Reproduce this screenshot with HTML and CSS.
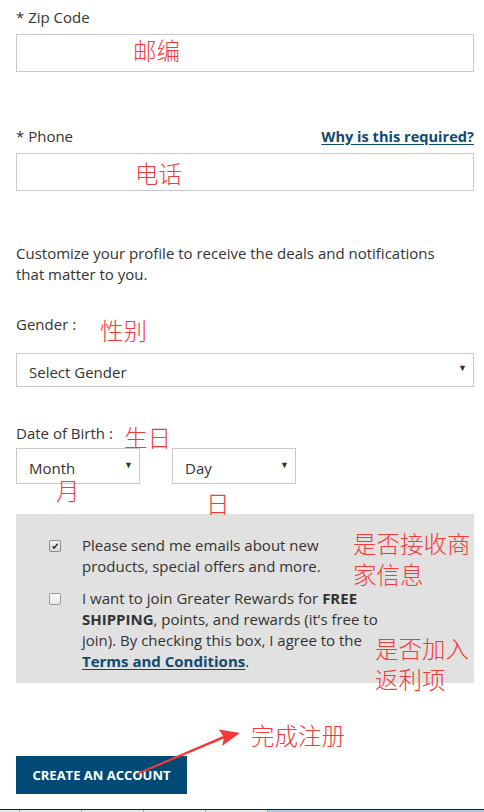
FILE: index.html
```html
<!DOCTYPE html>
<html>
<head>
<meta charset="utf-8">
<link rel="stylesheet" href="styles.css">
</head>
<body>
<div class="page">
  <form class="form">
    <div class="field field-zip">
      <div class="label-row"><label class="label">* Zip Code</label></div>
      <div class="input"></div>
    </div>
    <div class="field field-phone">
      <div class="label-row">
        <label class="label">* Phone</label>
        <a class="why">Why is this required?</a>
      </div>
      <div class="input"></div>
    </div>
    <p class="intro">Customize your profile to receive the deals and notifications that matter to you.</p>
    <div class="field field-gender">
      <div class="label-row"><label class="label">Gender :</label></div>
      <div class="select select-wide"><span>Select Gender</span><span class="caret">▼</span></div>
    </div>
    <div class="field field-dob">
      <div class="label-row"><label class="label">Date of Birth :</label></div>
      <div class="dob-row">
        <div class="select select-small"><span>Month</span><span class="caret">▼</span></div>
        <div class="select select-small"><span>Day</span><span class="caret">▼</span></div>
      </div>
    </div>
    <div class="optins">
      <div class="optin">
        <span class="cb cb-checked"><svg viewBox="0 0 12 12" width="12" height="12"><path d="M3 6.2 L5 8.4 L9.2 3.2" fill="none" stroke="#333" stroke-width="1.8"/></svg></span>
        <span class="optin-text">Please send me emails about new products, special offers and more.</span>
      </div>
      <div class="optin">
        <span class="cb"></span>
        <span class="optin-text">I want to join Greater Rewards for <b>FREE SHIPPING</b>, points, and rewards (it’s free to join). By checking this box, I agree to the <a class="terms">Terms and Conditions</a>.</span>
      </div>
    </div>
    <div class="actions">
      <button type="button" class="btn">CREATE AN ACCOUNT</button>
    </div>
  </form>
  <div class="taskbar">
    <span class="tab"></span><span class="tab"></span><span class="tab"></span><span class="tab"></span><span class="tab"></span><span class="tab tab-last"></span>
  </div>

  <span class="note note-zip">邮编</span>
  <span class="note note-phone">电话</span>
  <span class="note note-gender">性别</span>
  <span class="note note-dob">生日</span>
  <span class="note note-month">月</span>
  <span class="note note-day">日</span>
  <span class="note note-mail">是否接收商<br>家信息</span>
  <span class="note note-rewards">是否加入<br>返利项</span>
  <span class="note note-done">完成注册</span>
  <svg class="arrow" width="484" height="812" viewBox="0 0 484 812">
    <polygon points="137,775 224,738.5 222,746 240,733 219,729.5 223,736 138,772.5" fill="#f23a3a"/>
  </svg>
</div>
</body>
</html>
```

FILE: styles.css
```css
* { box-sizing: border-box; }
html, body { margin: 0; padding: 0; background: #fff; }
body {
  font-family: "Open Sans", "Liberation Sans", sans-serif;
  font-size: 15px;
  color: #333;
  width: 484px;
  height: 812px;
  overflow: hidden;
}
.page { position: relative; width: 484px; height: 812px; }
.form {
  display: flex;
  flex-direction: column;
  padding: 7px 10px 0 16px;
  margin: 0;
}
.field { display: flex; flex-direction: column; }
.label-row {
  display: flex;
  justify-content: space-between;
  align-items: center;
  height: 20px;
  line-height: 20px;
}
.label { font-size: 15px; color: #333; }
.why {
  font-weight: 700;
  color: #0f4a70;
  text-decoration: underline;
  text-underline-offset: 2px;
  font-size: 14.6px;
}
.input {
  margin-top: 7px;
  height: 38px;
  border: 1px solid #c9c9c9;
  background: #fff;
}
.field-phone { margin-top: 54px; }
.field-phone .label-row { margin-top: -1px; height: 21px; }
.intro {
  margin: 52px 0 0;
  line-height: 21px;
  font-size: 15px;
  color: #333;
  width: 445px;
}
.field-gender { margin-top: 29px; }
.field-gender .select { margin-top: 19px; }
.select {
  display: flex;
  justify-content: space-between;
  align-items: center;
  border: 1px solid #c9c9c9;
  background: #fff;
  padding: 0 6px 0 12px;
  font-size: 15px;
  color: #333;
}
.select-wide { height: 34px; padding-top: 3px; }
.select-wide .caret { margin-top: -8px; }
.caret { font-size: 9px; color: #333; }
.field-dob { margin-top: 36px; }
.dob-row { display: flex; gap: 32px; margin-top: 5px; }
.select-small { width: 124px; height: 36px; padding-top: 4px; }
.select-small .caret { margin-top: -8px; }
.optins {
  margin-top: 30px;
  background: #e1e1e1;
  padding: 21px 10px 11px 33px;
  display: flex;
  flex-direction: column;
  gap: 11px;
}
.optin { display: flex; align-items: flex-start; }
.cb {
  flex: none;
  width: 12px;
  height: 12px;
  margin-top: 5px;
  border: 1px solid #9a9a9a;
  border-radius: 2px;
  background: linear-gradient(#fdfdfd, #e9e9e9);
  display: flex;
  align-items: center;
  justify-content: center;
}
.cb svg { display: block; }
.cb-checked { background: linear-gradient(#f4f4f4, #dcdcdc); border-color: #8a8a8a; }
.optin-text {
  margin-left: 21px;
  width: 297px;
  line-height: 21px;
  font-size: 15px;
  color: #333;
}
.optin-text b { font-weight: 700; }
.terms {
  color: #0f4a70;
  font-weight: 700;
  text-decoration: underline;
  text-underline-offset: 2px;
}
.actions { margin-top: 73px; }
.btn {
  display: block;
  width: 171px;
  height: 38px;
  background: #004a75;
  color: #fff;
  border: 0;
  border-radius: 0;
  font-family: "Open Sans", "Liberation Sans", sans-serif;
  font-weight: 700;
  font-size: 13px;
  padding: 0;
  text-align: center;
}
.taskbar {
  position: absolute;
  left: 0;
  top: 809px;
  width: 484px;
  height: 3px;
  border-top: 1px solid #1e1e1e;
  display: flex;
  background: #c9dfee;
}
.tab { width: 62px; height: 2px; border-left: 1px solid #8aa7bb; background: #dfeaf2; }
.tab:first-child { width: 19px; border-left: 0; }
.tab-last { flex: 1; background: #a9cde6; }

.note {
  position: absolute;
  font-family: "Noto Sans CJK SC", sans-serif;
  font-weight: 300;
  font-size: 23.5px;
  line-height: 31px;
  color: #f23a3a;
  white-space: nowrap;
}
.note-zip { left: 133px; top: 35px; }
.note-phone { left: 135px; top: 158px; }
.note-gender { left: 100px; top: 315px; }
.note-dob { left: 124px; top: 422px; }
.note-month { left: 56px; top: 475px; }
.note-day { left: 206px; top: 488px; }
.note-mail { left: 353px; top: 528px; }
.note-rewards { left: 375px; top: 633px; }
.note-done { left: 251px; top: 720px; }
.arrow { position: absolute; left: 0; top: 0; pointer-events: none; }
```
